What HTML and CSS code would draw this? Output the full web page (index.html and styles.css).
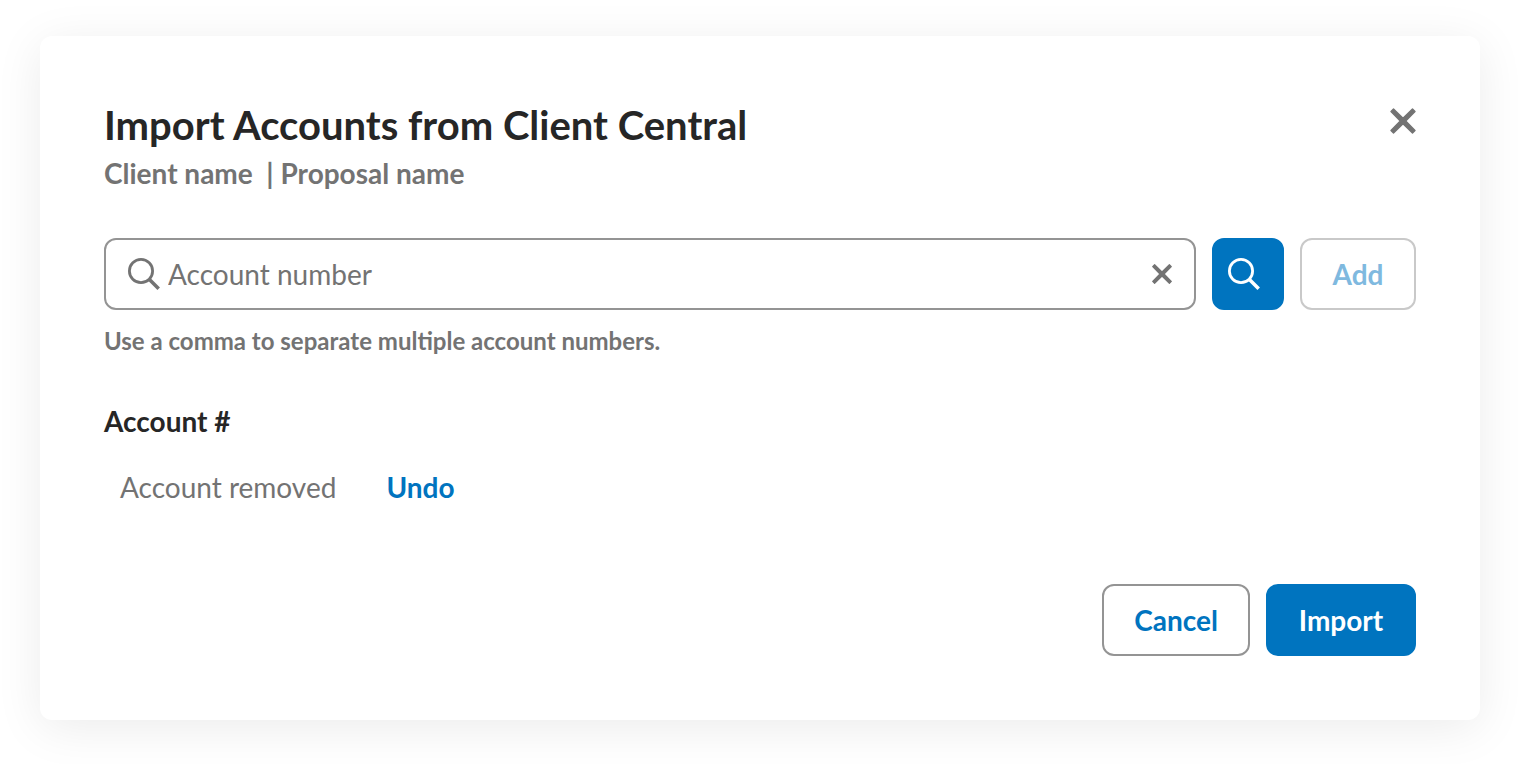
FILE: index.html
```html
<!DOCTYPE html>
<html lang="en">
<head>
<meta charset="utf-8">
<title>Import Accounts from Client Central</title>
<link rel="stylesheet" href="styles.css">
</head>
<body>
<main class="dialog" role="dialog" aria-labelledby="dialog-title">
  <header class="dialog-header">
    <div>
      <h1 class="title" id="dialog-title">Import Accounts from Client Central</h1>
      <p class="subtitle">Client name &nbsp;| Proposal name</p>
    </div>
    <button class="icon-button close" type="button" aria-label="Close">
      <svg width="26" height="26" viewBox="0 0 26 26"><path d="M3.500 1 13 10.300 22.500 1 25 3.500 15.700 13 25 22.500 22.500 25 13 15.700 3.500 25 1 22.500 10.300 13 1 3.500Z" fill="currentColor" stroke="currentColor" stroke-width="1.400" stroke-linejoin="round"/></svg>
    </button>
  </header>
  <form class="search-row">
    <div class="search-field">
      <svg class="search-icon" width="34" height="34" viewBox="0 0 34 34" fill="none" stroke="currentColor"><circle cx="13" cy="14" r="11.600" stroke-width="2.800"/><path d="M21.200 22.200 30.700 31.700" stroke-width="3.500"/></svg>
      <input class="search-input" id="account-number" type="text" placeholder="Account number" aria-label="Account number" aria-describedby="account-hint">
      <button class="icon-button clear" type="button" aria-label="Clear">
        <svg width="20" height="20" viewBox="0 0 20 20"><path d="M2.600 .700 10 8 17.400 .700 19.300 2.600 12 10 19.300 17.400 17.400 19.300 10 12 2.600 19.300 .700 17.400 8 10 .700 2.600Z" fill="currentColor" stroke="currentColor" stroke-width="1.200" stroke-linejoin="round"/></svg>
      </button>
    </div>
    <button class="button primary search-button" type="submit" aria-label="Search">
      <svg class="search-icon" width="34" height="34" viewBox="0 0 34 34" fill="none" stroke="currentColor"><circle cx="13" cy="14" r="11.600" stroke-width="2.800"/><path d="M21.200 22.200 30.700 31.700" stroke-width="3.500"/></svg>
    </button>
    <button class="button add" type="button" disabled>Add</button>
  </form>
  <p class="hint" id="account-hint">Use a comma to separate multiple account numbers.</p>
  <section class="accounts">
    <h2 class="accounts-title">Account #</h2>
    <div class="account-row"><span>Account removed</span><button class="undo" type="button">Undo</button></div>
  </section>
  <footer class="actions">
    <button class="button cancel" type="button">Cancel</button>
    <button class="button primary import" type="button">Import</button>
  </footer>
</main>
</body>
</html>
```
FILE: styles.css
```css
* { box-sizing: border-box; }
body {
  margin: 0;
  padding: 36px 40px 44px;
  background: #fff;
  color: #262626;
  font-family: Lato, "Noto Sans", sans-serif;
  font-size: 28px;
  line-height: 36px;
}
h1, h2, p { margin: 0; }
button, input { font: inherit; }
button { cursor: pointer; }
svg { display: block; }
.dialog {
  padding: 64px;
  border-radius: 12px;
  background: #fff;
  box-shadow: 0 8px 48px rgba(0, 0, 0, 0.08);
}
.dialog-header {
  display: flex;
  justify-content: space-between;
  align-items: flex-start;
}
.title { font-size: 40px; line-height: 50px; font-weight: 700; }
.subtitle {
  margin-top: 5px;
  color: #737373;
  font-weight: 700;
}
.icon-button {
  padding: 0;
  border: 0;
  background: none;
  color: #737373;
}
.close { margin-top: 8px; }
.search-row { display: flex; gap: 16px; margin-top: 47px; }
.search-field {
  display: flex;
  align-items: center;
  flex: 1;
  min-width: 0;
  height: 72px;
  padding: 0 22px;
  border: 2px solid #949494;
  border-radius: 12px;
  color: #737373;
}
.search-input {
  flex: 1;
  min-width: 0;
  padding: 0;
  margin-left: 6px;
  border: 0;
  outline: 0;
  background: none;
  color: #262626;
}
.search-input::placeholder { color: #737373; opacity: 1; }
.button {
  height: 72px;
  padding: 0 30px;
  border: 2px solid #949494;
  border-radius: 12px;
  background: #fff;
  color: #0074bf;
  font-weight: 700;
}
.primary { border-color: #0074bf; background: #0074bf; color: #fff; }
.search-button { width: 72px; padding: 0 14px; }
.add { min-width: 116px; border-color: #c9c9c9; color: #7fb9df; cursor: default; }
.import { min-width: 150px; }
.hint {
  margin-top: 16px;
  color: #737373;
  font-size: 24px;
  line-height: 30px;
  font-weight: 700;
}
.accounts { margin-top: 47px; }
.accounts-title { font-size: 28px; line-height: 36px; font-weight: 700; }
.account-row {
  display: flex;
  gap: 50px;
  margin-top: 30px;
  padding-left: 16px;
  color: #737373;
}
.undo {
  padding: 0;
  border: 0;
  background: none;
  color: #0074bf;
  font-weight: 700;
}
.actions {
  display: flex;
  justify-content: flex-end;
  gap: 16px;
  margin-top: 79px;
}
```
